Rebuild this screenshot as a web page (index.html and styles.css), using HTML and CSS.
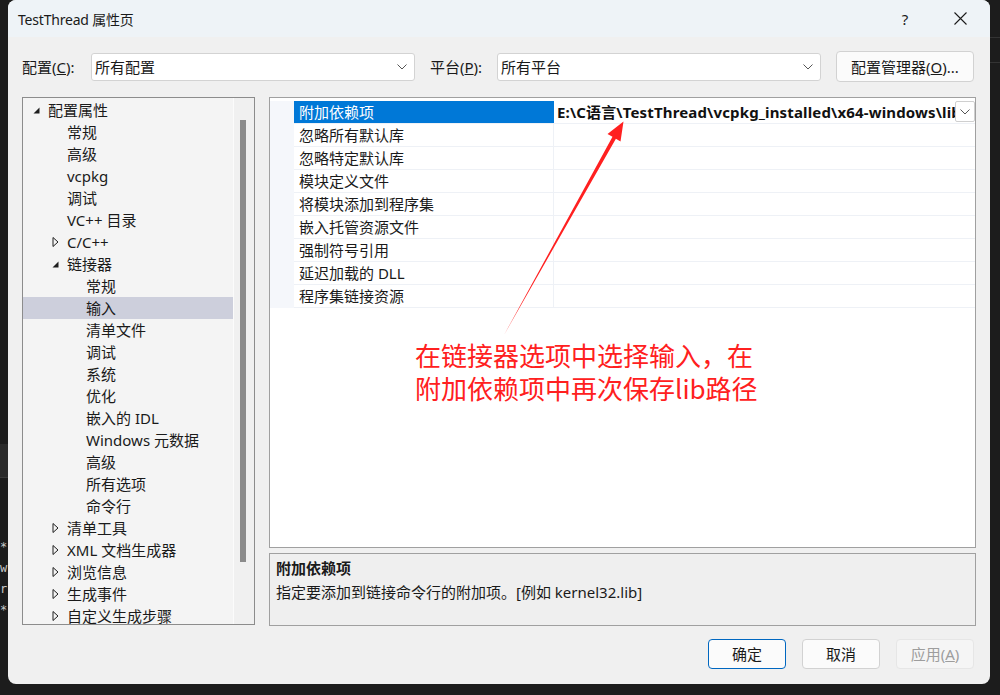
FILE: index.html
```html
<!DOCTYPE html>
<html lang="zh-CN">
<head>
<meta charset="utf-8">
<title>TestThread 属性页</title>
<link rel="stylesheet" href="styles.css">
</head>
<body>
<div class="desk">
  <div class="strip-left">
    <div class="term-bar"></div>
    <div class="term-lines"><span>*</span><span>w</span><span>r</span><span>*</span></div>
  </div>

  <div class="dialog">
    <div class="titlebar">
      <span class="title">TestThread 属性页</span>
      <span class="help">?</span>
      <span class="close"><svg width="13" height="13" viewBox="0 0 13 13"><path d="M0.5 0.5 L12.5 12.5 M12.5 0.5 L0.5 12.5" stroke="#1b1b1b" stroke-width="1.1" fill="none"/></svg></span>
    </div>

    <div class="body">
      <div class="config-row">
        <span class="lbl lbl-cfg">配置(<u>C</u>):</span>
        <div class="combo"><span>所有配置</span><svg width="10" height="6" viewBox="0 0 10 6"><path d="M0.5 0.5 L5 5 L9.5 0.5" stroke="#555" fill="none"/></svg></div>
        <span class="lbl lbl-plat">平台(<u>P</u>):</span>
        <div class="combo"><span>所有平台</span><svg width="10" height="6" viewBox="0 0 10 6"><path d="M0.5 0.5 L5 5 L9.5 0.5" stroke="#555" fill="none"/></svg></div>
        <button class="btn btn-mgr">配置管理器(<u>O</u>)...</button>
      </div>

      <div class="main">
        <div class="tree">
          <div class="tree-list">
            <div class="node l0"><span class="tw"><svg width="7" height="7" viewBox="0 0 7 7"><path d="M6.5 0.5 V6.5 H0.5 Z" fill="#1e1e1e"/></svg></span>配置属性</div>
            <div class="node l1"><span class="tw"></span>常规</div>
            <div class="node l1"><span class="tw"></span>高级</div>
            <div class="node l1"><span class="tw"></span>vcpkg</div>
            <div class="node l1"><span class="tw"></span>调试</div>
            <div class="node l1"><span class="tw"></span>VC++ 目录</div>
            <div class="node l1"><span class="tw"><svg width="7" height="10" viewBox="0 0 7 10"><path d="M1 0.5 L6 5 L1 9.5 Z" fill="none" stroke="#1e1e1e"/></svg></span>C/C++</div>
            <div class="node l1"><span class="tw"><svg width="7" height="7" viewBox="0 0 7 7"><path d="M6.5 0.5 V6.5 H0.5 Z" fill="#1e1e1e"/></svg></span>链接器</div>
            <div class="node l2"><span class="tw"></span>常规</div>
            <div class="node l2 sel"><span class="tw"></span>输入</div>
            <div class="node l2"><span class="tw"></span>清单文件</div>
            <div class="node l2"><span class="tw"></span>调试</div>
            <div class="node l2"><span class="tw"></span>系统</div>
            <div class="node l2"><span class="tw"></span>优化</div>
            <div class="node l2"><span class="tw"></span>嵌入的 IDL</div>
            <div class="node l2"><span class="tw"></span>Windows 元数据</div>
            <div class="node l2"><span class="tw"></span>高级</div>
            <div class="node l2"><span class="tw"></span>所有选项</div>
            <div class="node l2"><span class="tw"></span>命令行</div>
            <div class="node l1"><span class="tw"><svg width="7" height="10" viewBox="0 0 7 10"><path d="M1 0.5 L6 5 L1 9.5 Z" fill="none" stroke="#1e1e1e"/></svg></span>清单工具</div>
            <div class="node l1"><span class="tw"><svg width="7" height="10" viewBox="0 0 7 10"><path d="M1 0.5 L6 5 L1 9.5 Z" fill="none" stroke="#1e1e1e"/></svg></span>XML 文档生成器</div>
            <div class="node l1"><span class="tw"><svg width="7" height="10" viewBox="0 0 7 10"><path d="M1 0.5 L6 5 L1 9.5 Z" fill="none" stroke="#1e1e1e"/></svg></span>浏览信息</div>
            <div class="node l1"><span class="tw"><svg width="7" height="10" viewBox="0 0 7 10"><path d="M1 0.5 L6 5 L1 9.5 Z" fill="none" stroke="#1e1e1e"/></svg></span>生成事件</div>
            <div class="node l1"><span class="tw"><svg width="7" height="10" viewBox="0 0 7 10"><path d="M1 0.5 L6 5 L1 9.5 Z" fill="none" stroke="#1e1e1e"/></svg></span>自定义生成步骤</div>
          </div>
          <div class="tree-scroll"><div class="thumb"></div></div>
        </div>

        <div class="right">
          <div class="grid">
            <div class="rows">
              <div class="row sel"><span class="gutter"></span><span class="name">附加依赖项</span><span class="value bold">E:\C语言\TestThread\vcpkg_installed\x64-windows\lib\openssl.lib;%(AdditionalDependencies)</span><span class="drop"><svg width="10" height="6" viewBox="0 0 10 6"><path d="M0.5 0.5 L5 5 L9.5 0.5" stroke="#555" fill="none"/></svg></span></div>
              <div class="row"><span class="gutter"></span><span class="name">忽略所有默认库</span><span class="value"></span></div>
              <div class="row"><span class="gutter"></span><span class="name">忽略特定默认库</span><span class="value"></span></div>
              <div class="row"><span class="gutter"></span><span class="name">模块定义文件</span><span class="value"></span></div>
              <div class="row"><span class="gutter"></span><span class="name">将模块添加到程序集</span><span class="value"></span></div>
              <div class="row"><span class="gutter"></span><span class="name">嵌入托管资源文件</span><span class="value"></span></div>
              <div class="row"><span class="gutter"></span><span class="name">强制符号引用</span><span class="value"></span></div>
              <div class="row"><span class="gutter"></span><span class="name">延迟加载的 DLL</span><span class="value"></span></div>
              <div class="row"><span class="gutter"></span><span class="name">程序集链接资源</span><span class="value"></span></div>
            </div>
          </div>
          <div class="desc">
            <div class="desc-title">附加依赖项</div>
            <div class="desc-text">指定要添加到链接命令行的附加项。[例如 kernel32.lib]</div>
          </div>
        </div>
      </div>

      <div class="buttons">
        <button class="btn btn-ok">确定</button>
        <button class="btn">取消</button>
        <button class="btn btn-dis">应用(<u>A</u>)</button>
      </div>
    </div>
  </div>

  <div class="strip-right"></div>
</div>

<svg class="annot-arrow" width="1000" height="695" viewBox="0 0 1000 695">
  <polygon points="504,335 612.5,136.7 607.5,134 623.5,121.5 620.5,141.5 615.9,138.7" fill="#ff2020"/>
</svg>
<div class="annot-text">在链接器选项中选择输入，在<br>附加依赖项中再次保存lib路径</div>
</body>
</html>
```

FILE: styles.css
```css
* { box-sizing: border-box; }

html, body {
  margin: 0;
  padding: 0;
}

body {
  width: 1000px;
  height: 695px;
  overflow: hidden;
  background: #1c1c1c;
  font-family: "Noto Sans", "Noto Sans CJK SC", sans-serif;
  font-size: 15px;
  color: #1a1a1a;
  position: relative;
}

.desk {
  display: flex;
  height: 695px;
}

/* background editor strips */
.strip-left {
  width: 8px;
  flex: none;
  display: flex;
  flex-direction: column;
  overflow: hidden;
}
.term-bar {
  margin-top: 444px;
  height: 34px;
  background: #2a2a2a;
  border-bottom: 1px solid #3a3a3a;
}
.term-lines {
  margin-top: 59px;
  display: flex;
  flex-direction: column;
  color: #c8c8c8;
  font-family: "DejaVu Sans Mono", monospace;
  font-size: 12px;
  line-height: 21px;
}
.term-lines span { padding-left: 0; }

.strip-right {
  flex: 1;
  border-top: 37px solid #1c1c1c;
  background: #1c1c1c;
}
.strip-right::before {
  content: "";
  display: block;
  height: 1px;
  background: #333;
}
.strip-right::after {
  content: "";
  display: block;
  margin-top: 24px;
  height: 1px;
  background: #333;
}

/* dialog */
.dialog {
  width: 982px;
  height: 684px;
  flex: none;
  background: #f0f0f0;
  border-radius: 8px;
  overflow: hidden;
  display: flex;
  flex-direction: column;
}

.titlebar {
  height: 37px;
  background: #eef3f7;
  display: flex;
  align-items: center;
  padding-left: 10px;
  flex: none;
}
.title {
  font-size: 14px;
  letter-spacing: -0.2px;
  color: #1a1a1a;
}
.help {
  margin-left: auto;
  font-size: 15px;
  color: #1a1a1a;
  width: 14px;
  text-align: center;
}
.close {
  margin-left: 42px;
  margin-right: 23px;
  display: flex;
  align-items: center;
}

.body {
  flex: 1;
  display: flex;
  flex-direction: column;
  padding: 0 14px 0 14px;
}

/* config row */
.config-row {
  margin-top: 14px;
  margin-right: 2px;
  height: 31px;
  display: flex;
  align-items: center;
  flex: none;
}
.lbl { white-space: nowrap; flex: none; }
.lbl-cfg { width: 69px; }
.lbl-plat { width: 67px; margin-left: 15px; }
.combo {
  width: 324px;
  flex: none;
  height: 28px;
  background: #ffffff;
  border: 1px solid #d3d3d3;
  border-radius: 3px;
  display: flex;
  align-items: center;
  padding: 0 7px 0 3px;
  justify-content: space-between;
}

.btn {
  font-family: inherit;
  font-size: 15px;
  color: #1a1a1a;
  background: #fbfbfb;
  border: 1px solid #d2d2d2;
  border-radius: 4px;
  height: 30px;
  width: 78px;
  flex: none;
  padding: 0;
  line-height: 26px;
}
.btn-mgr {
  margin-left: 15px;
  width: 138px;
  height: 31px;
}

/* main */
.main {
  margin-top: 15px;
  display: flex;
  height: 529px;
  flex: none;
}

.tree {
  width: 233px;
  flex: none;
  height: 528px;
  border: 1px solid #8c8c8c;
  background: #f4f4f4;
  display: flex;
  overflow: hidden;
}
.tree-list {
  width: 210px;
  padding-top: 1px;
  flex: none;
}
.node {
  height: 22px;
  line-height: 22px;
  display: flex;
  align-items: center;
  white-space: nowrap;
  padding-left: 10px;
}
.node.l1 { padding-left: 29px; }
.node.l2 { padding-left: 48px; }
.node.sel { background: #cdcfdc; }
.tw {
  width: 15px;
  flex: none;
  display: flex;
  align-items: center;
}

.tree-scroll {
  flex: 1;
  border-left: 1px solid #fbfbfb;
  background: #f0f0f0;
  padding-top: 22px;
  padding-left: 6px;
}
.thumb {
  width: 6px;
  height: 442px;
  background: #8b8b8b;
}

.right {
  margin-left: 14px;
  width: 707px;
  flex: none;
  display: flex;
  flex-direction: column;
}

.grid {
  height: 451px;
  border: 1px solid #a0a0a0;
  background: #ffffff;
  padding-top: 3px;
}
.row {
  height: 23px;
  display: flex;
  border-bottom: 1px solid #eef1f6;
  position: relative;
}
.gutter {
  width: 24px;
  flex: none;
  background: #f5f7fb;
  margin-bottom: -1px;
}
.name {
  width: 260px;
  flex: none;
  padding-left: 5px;
  line-height: 22px;
  border-right: 1px solid #eef1f6;
  white-space: nowrap;
}
.value {
  flex: 1;
  padding-left: 3px;
  line-height: 22px;
  white-space: nowrap;
  overflow: hidden;
  min-width: 0;
}
.value.bold { font-weight: 700; color: #111; letter-spacing: 0.15px; }
.row.sel .name {
  background: #0078d7;
  color: #ffffff;
  border-right-color: #0078d7;
}
.drop {
  position: absolute;
  right: 0;
  top: 0;
  width: 20px;
  height: 21px;
  background: #ffffff;
  border: 1px solid #cfcfcf;
  border-radius: 2px;
  display: flex;
  align-items: center;
  justify-content: center;
}

.desc {
  margin-top: 5px;
  height: 73px;
  border: 1px solid #a0a0a0;
  background: #efefef;
  padding: 2px 6px;
}
.desc-title {
  font-weight: 700;
  line-height: 24px;
}
.desc-text {
  line-height: 24px;
}

/* buttons */
.buttons {
  margin-top: 13px;
  margin-right: 2px;
  display: flex;
  justify-content: flex-end;
  gap: 16px;
}
.btn-ok {
  border-color: #0067c0;
}
.btn-dis {
  background: #f5f5f5;
  border-color: #e6e6e6;
  color: #9d9d9d;
}

/* annotation overlay */
.annot-arrow {
  position: absolute;
  left: 0;
  top: 0;
  pointer-events: none;
}
.annot-text {
  position: absolute;
  left: 415px;
  top: 338px;
  color: #ff2020;
  font-family: "Noto Sans CJK SC", sans-serif;
  font-size: 26px;
  line-height: 33px;
  white-space: nowrap;
}
```
